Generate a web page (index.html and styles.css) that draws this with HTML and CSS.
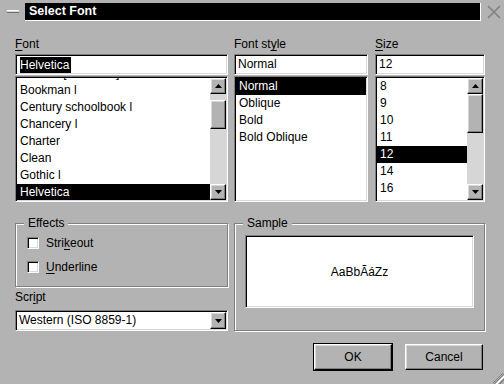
FILE: index.html
```html
<!DOCTYPE html>
<html>
<head>
<meta charset="utf-8">
<title>Select Font</title>
<link rel="stylesheet" href="styles.css">
</head>
<body>
<div class="window">
  <div class="titlebar">
    <span class="menu-btn"></span>
    <div class="title">Select Font</div>
    <svg class="close" width="14" height="14" viewBox="0 0 14 14">
      <path d="M1 1 L13 13 M13 1 L1 13" stroke="#808080" stroke-width="1.6" fill="none"/>
    </svg>
  </div>

  <div class="content">
    <div class="top">
      <div class="col col-font">
        <div class="lbl"><u>F</u>ont</div>
        <div class="input"><span class="sel">Helvetica</span></div>
        <div class="list">
          <div class="items items-font">
            <div class="item">Charter [bitstream]</div>
            <div class="item">Bookman l</div>
            <div class="item">Century schoolbook l</div>
            <div class="item">Chancery l</div>
            <div class="item">Charter</div>
            <div class="item">Clean</div>
            <div class="item">Gothic l</div>
            <div class="item selected">Helvetica</div>
          </div>
          <div class="scrollbar">
            <div class="sb-btn"><svg width="7" height="4" viewBox="0 0 7 4"><path d="M3.5 0 L7 4 L0 4 Z" fill="#000"/></svg></div>
            <div class="trough"><div class="thumb thumb-font"></div></div>
            <div class="sb-btn"><svg width="7" height="4" viewBox="0 0 7 4"><path d="M0 0 L7 0 L3.5 4 Z" fill="#000"/></svg></div>
          </div>
        </div>
      </div>

      <div class="col col-style">
        <div class="lbl">Font st<u>y</u>le</div>
        <div class="input"><span class="val">Normal</span></div>
        <div class="list">
          <div class="items">
            <div class="item selected">Normal</div>
            <div class="item">Oblique</div>
            <div class="item">Bold</div>
            <div class="item">Bold Oblique</div>
          </div>
        </div>
      </div>

      <div class="col col-size">
        <div class="lbl"><u>S</u>ize</div>
        <div class="input"><span class="val">12</span></div>
        <div class="list">
          <div class="items">
            <div class="item">8</div>
            <div class="item">9</div>
            <div class="item">10</div>
            <div class="item">11</div>
            <div class="item selected">12</div>
            <div class="item">14</div>
            <div class="item">16</div>
            <div class="item">18</div>
          </div>
          <div class="scrollbar">
            <div class="sb-btn"><svg width="7" height="4" viewBox="0 0 7 4"><path d="M3.5 0 L7 4 L0 4 Z" fill="#000"/></svg></div>
            <div class="trough"><div class="thumb thumb-size"></div></div>
            <div class="sb-btn"><svg width="7" height="4" viewBox="0 0 7 4"><path d="M0 0 L7 0 L3.5 4 Z" fill="#000"/></svg></div>
          </div>
        </div>
      </div>
    </div>

    <div class="bottom">
      <div class="left">
        <div class="group effects">
          <span class="group-title">Effects</span>
          <div class="check"><span class="box"></span><span>Stri<u>k</u>eout</span></div>
          <div class="check"><span class="box"></span><span><u>U</u>nderline</span></div>
        </div>
        <div class="lbl script-lbl">Scr<u>i</u>pt</div>
        <div class="combo">
          <span class="combo-text">Western (ISO 8859-1)</span>
          <span class="sb-btn combo-btn"><svg width="7" height="4" viewBox="0 0 7 4"><path d="M0 0 L7 0 L3.5 4 Z" fill="#000"/></svg></span>
        </div>
      </div>
      <div class="group sample">
        <span class="group-title">Sample</span>
        <div class="sample-box">AaBbÃáZz</div>
      </div>
    </div>

    <div class="buttons">
      <div class="default-frame"><div class="btn">OK</div></div>
      <div class="btn cancel">Cancel</div>
    </div>
  </div>

  <svg class="grip" width="11" height="11" viewBox="0 0 11 11">
    <path d="M10 0 L0 10 M11 1 L1 11" stroke="#808080" stroke-width="1"/>
    <path d="M11 3 L3 11 M11 4 L4 11" stroke="#fff" stroke-width="1"/>
    <path d="M11 6 L6 11 M11 7 L7 11" stroke="#808080" stroke-width="1"/>
  </svg>
</div>
</body>
</html>
```
FILE: styles.css
```css
* { box-sizing: border-box; }
html, body { margin: 0; padding: 0; }
body {
  width: 504px;
  height: 384px;
  overflow: hidden;
  background: #b3b3b3;
  color: #000;
  font-family: "Liberation Sans", Arial, sans-serif;
  font-size: 12px;
}
u { text-decoration: underline; text-underline-offset: 2px; }

.window { position: relative; width: 504px; height: 384px; }

/* title bar */
.titlebar {
  display: flex;
  align-items: flex-start;
  height: 24px;
  padding: 3px 3px 0 7px;
}
.menu-btn {
  width: 12px;
  height: 3px;
  margin-top: 7px;
  background: #d4d4d4;
  border-top: 1px solid #fff;
  border-bottom: 1px solid #6e6e6e;
}
.title {
  flex: 1;
  height: 18px;
  margin-left: 6px;
  padding-left: 4px;
  background: #000;
  border-right: 1px solid #fff;
  border-bottom: 1px solid #fff;
  color: #fff;
  font-weight: bold;
  font-size: 12.5px;
  line-height: 17px;
}
.close { margin: 2px 0 0 6px; }

/* main content */
.content { padding: 12px 19px 0 15px; }

.top { display: flex; column-gap: 6px; }
.col { display: flex; flex-direction: column; }
.col-font { width: 213px; }
.col-style { width: 134px; margin-right: 1px; }
.col-size { width: 110px; }

.lbl { height: 16px; line-height: 16px; margin-bottom: 2px; white-space: nowrap; }

.input, .list, .combo, .sample-box {
  border: 1px solid;
  border-color: #808080 #fff #fff #808080;
  box-shadow: inset 1px 1px 0 #000, inset -1px -1px 0 #d9d9d9;
  background: #fff;
  padding: 1px;
}
.input {
  height: 21px;
  display: flex;
  align-items: center;
  padding-left: 3px;
  line-height: 17px;
}
.sel {
  background: #000;
  color: #fff;
  line-height: 16px;
  padding: 0 2px 0 0;
  border-left: 1px solid #fff;
}

.list {
  margin-top: 1px;
  height: 126px;
  display: flex;
}
.items { flex: 1; overflow: hidden; min-width: 0; }
.items-font .item:first-child { margin-top: -13px; }
.item {
  height: 17px;
  line-height: 17px;
  padding-left: 3px;
  white-space: nowrap;
}
.item.selected { background: #000; color: #fff; }

/* scrollbar */
.scrollbar {
  width: 16px;
  display: flex;
  flex-direction: column;
  background: #d6d6d6;
}
.sb-btn, .thumb, .btn {
  background: #b3b3b3;
  border: 1px solid;
  border-color: #fff #000 #000 #fff;
  box-shadow: inset -1px -1px 0 #808080, inset 1px 1px 0 #d9d9d9;
}
.sb-btn {
  width: 16px;
  height: 16px;
  display: flex;
  align-items: center;
  justify-content: center;
  flex: none;
}
.trough { flex: 1; }
.thumb { width: 16px; }
.thumb-font { margin-top: 6px; height: 29px; }
.thumb-size { margin-top: 0; height: 39px; }

/* bottom area */
.bottom { display: flex; column-gap: 6px; margin-top: 21px; }
.left { width: 213px; display: flex; flex-direction: column; }

.group {
  position: relative;
  border: 1px solid #808080;
  box-shadow: inset 1px 1px 0 #fff, 1px 1px 0 #fff;
}
.group-title {
  position: absolute;
  top: -9px;
  left: 8px;
  padding: 0 4px;
  line-height: 16px;
  background: #b3b3b3;
}
.effects { padding: 7px 0 7px; height: 64px; }
.check {
  height: 24px;
  display: flex;
  align-items: center;
  padding-left: 11px;
  column-gap: 7px;
}
.box {
  width: 12px;
  height: 12px;
  background: #fff;
  border: 1px solid;
  border-color: #808080 #fff #fff #808080;
  box-shadow: inset 1px 1px 0 #000, inset -1px -1px 0 #d9d9d9;
}
.script-lbl { margin: 2px 0 5px; }

.combo {
  height: 21px;
  display: flex;
  align-items: stretch;
}
.combo-text { flex: 1; line-height: 17px; padding-left: 2px; white-space: nowrap; }
.combo-btn { height: auto; }

.sample { flex: 1; padding: 11px 10px 0; height: 108px; }
.sample-box {
  height: 73px;
  display: flex;
  align-items: center;
  justify-content: center;
  padding: 2px;
}

/* buttons */
.buttons {
  display: flex;
  justify-content: flex-end;
  align-items: flex-start;
  column-gap: 12px;
  margin: 12px 2px 0 0;
}
.default-frame { border: 1px solid #000; }
.btn {
  width: 78px;
  height: 26px;
  display: flex;
  align-items: center;
  justify-content: center;
}
.cancel { margin-top: 1px; }

.grip { position: absolute; right: 0; bottom: 0; }
```
